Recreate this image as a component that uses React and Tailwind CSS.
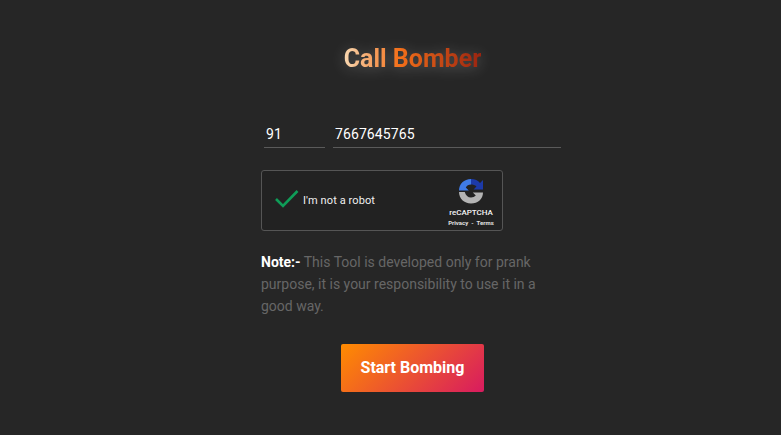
const RecaptchaLogo = () => (
  <svg width="26" height="26" viewBox="0 0 26 26">
    {/* dark blue arrow, top right */}
    <path d="M13 1 C17 1 20 2.500 22 5 L25 2 L25 11.500 L15.500 11.500 L18.500 8.500 C17 7 15 6.500 13 6.500 Z" fill="#1c3aa9" />
    {/* blue arrow, top left */}
    <path d="M13 1 L13 6.500 C10.500 6.500 8.800 7.800 7.800 9.500 L10.800 12.500 L1 12.500 C1 6 6 1 13 1 Z" fill="#3f7be6" />
    {/* grey arrow, bottom */}
    <path d="M1 14 L6.800 14 C7.500 17.500 10 19.500 13 19.500 C15 19.500 16.500 18.800 17.800 17.500 L14.800 14.500 L25 14.500 C25 21 20 25.500 13 25.500 C6 25.500 1 20.500 1 14 Z" fill="#b4b4b4" />
  </svg>
)

const App = () => {
  return (
    <div className="min-h-[435px] bg-[#262626] flex flex-col items-center font-['Roboto',sans-serif] overflow-hidden">
      <div className="w-[781px] flex flex-col items-center pl-[44px] pt-[43px]">
        <h1 className="text-[25px] leading-[32px] font-bold text-transparent bg-clip-text bg-[linear-gradient(90deg,#f8d7b0_0%,#f4701a_40%,#9a2410_100%)] drop-shadow-[0_2px_7px_rgba(255,255,255,0.25)]">
          Call Bomber
        </h1>
      </div>

      <div className="w-[300px] mt-[45px] ml-[41px]">
        {/* Phone inputs */}
        <div className="flex gap-2 pl-[3px]">
          <div className="w-[61px] h-[28px] border-b border-[#5a5a5a] pl-[2px] pt-[3px] text-[14px] leading-[22px] font-[450] tracking-[0.1px] text-white">
            91
          </div>
          <div className="flex-1 h-[28px] border-b border-[#5a5a5a] pl-[2px] pt-[3px] text-[14px] leading-[22px] font-[450] tracking-[0.1px] text-white">
            7667645765
          </div>
        </div>

        {/* Captcha */}
        <div className="mt-[22px] w-[242px] h-[61px] border border-[#555555] rounded-[3px] bg-[#222222] flex items-center">
          <svg width="26" height="20" viewBox="0 0 26 20" className="ml-[12px] mb-[4px]" fill="none">
            <path d="M2 10 L9 17 L23.500 2" stroke="#0f9d58" strokeWidth="2.600" />
          </svg>
          <span className="ml-[3px] pt-[2px] text-[11px] font-[450] tracking-[0.1px] text-[#f0f0f0]">I'm not a robot</span>
          <div className="ml-auto w-[60px] mr-[1px] flex flex-col items-center">
            <div className="mt-[4px]">
              <RecaptchaLogo />
            </div>
            <span className="mt-[4px] text-[8px] leading-[10px] font-medium text-[#f5f5f5]">reCAPTCHA</span>
            <span className="flex gap-[3px] text-[6px] leading-[9px] font-bold text-[#e0e0e0]">
              <span>Privacy</span>
              <span>-</span>
              <span>Terms</span>
            </span>
          </div>
        </div>

        {/* Note */}
        <p className="mt-[20px] w-[285px] text-[14px] leading-[22px] text-[#666666]">
          <span className="font-bold text-white">Note:-</span> This Tool is developed only for prank purpose, it is your responsibility to use it in a good way.
        </p>
      </div>

      <button className="mt-[27px] ml-[44px] w-[143px] h-[48px] rounded-[2px] bg-[linear-gradient(135deg,#ff8c00,#d81b60)] text-white text-[16px] font-bold">
        Start Bombing
      </button>
    </div>
  )
}

export default App
